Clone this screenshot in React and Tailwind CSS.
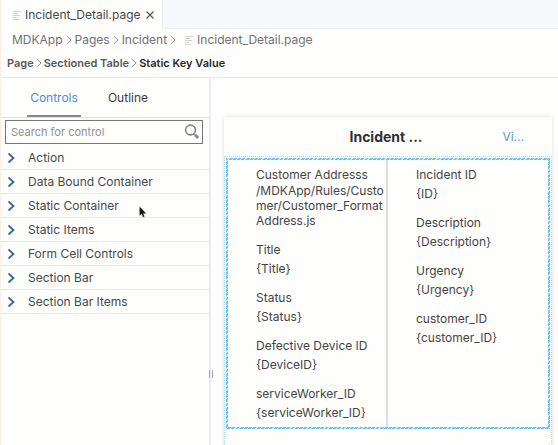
import React from "react";

const CONTROLS = [
  "Action",
  "Data Bound Container",
  "Static Container",
  "Static Items",
  "Form Cell Controls",
  "Section Bar",
  "Section Bar Items",
];

const LEFT_FIELDS = [
  { label: "Customer Addresss", value: "/MDKApp/Rules/Customer/Customer_FormatAddress.js", tight: true },
  { label: "Title", value: "{Title}" },
  { label: "Status", value: "{Status}" },
  { label: "Defective Device ID", value: "{DeviceID}" },
  { label: "serviceWorker_ID", value: "{serviceWorker_ID}" },
];

const RIGHT_FIELDS = [
  { label: "Incident ID", value: "{ID}" },
  { label: "Description", value: "{Description}" },
  { label: "Urgency", value: "{Urgency}" },
  { label: "customer_ID", value: "{customer_ID}" },
];

function FileIcon() {
  return (
    <svg className="h-2.5 w-2 shrink-0" viewBox="0 0 8 10" fill="none" stroke="#d2d2d4" strokeWidth="1" aria-hidden="true">
      <path d="M0 1.5h8M0 3.5h5M0 5.5h7M0 7.5h4M0 9.5h6" />
    </svg>
  );
}

function Chevron({ className, color = "#8a8a8c", width = 1.1 }) {
  return (
    <svg className={className} viewBox="0 0 8 12" fill="none" stroke={color} strokeWidth={width} aria-hidden="true">
      <path d="M1.5 1.5 6.5 6l-5 4.5" />
    </svg>
  );
}

function Crumb({ children }) {
  return (
    <>
      <a href="#" className="shrink-0">{children}</a>
      <Chevron className="h-2.5 w-2 shrink-0" />
    </>
  );
}

function FieldList({ fields }) {
  return (
    <dl className="flex flex-col gap-3.5">
      {fields.map((f) => (
        <div key={f.label} className={f.tight ? "flex flex-col gap-px" : "flex flex-col gap-1"}>
          <dt>{f.label}</dt>
          <dd className="break-all">{f.value}</dd>
        </div>
      ))}
    </dl>
  );
}

function ControlsPanel() {
  return (
    <aside className="relative w-[210px] shrink-0 border-r-2 border-[#ebebf3]">
      <div role="tablist" className="flex h-10 items-stretch border-b border-[#e4e4ec] pl-[26px] text-[12px]">
        <button role="tab" aria-selected="true" className="w-[54px] border-b-2 border-[#85878b] pt-0.5 text-[#4a8be0]">
          Controls
        </button>
        <button role="tab" aria-selected="false" className="ml-6 w-[46px] border-b-2 border-transparent pt-0.5 text-[#3c3c3e]">
          Outline
        </button>
      </div>
      <label className="mt-0.5 mr-1.5 ml-1 flex h-6 items-center border border-[#77787c] pr-0.5 pl-[5px]">
        <input
          type="text"
          aria-label="Search for control"
          placeholder="Search for control"
          className="min-w-0 flex-1 bg-transparent text-[11px] outline-none placeholder:text-[#909092]"
        />
        <svg className="h-4 w-4 shrink-0" viewBox="0 0 16 16" fill="none" stroke="#85868a" aria-hidden="true">
          <circle cx="6.5" cy="6" r="4.9" strokeWidth="1.6" />
          <path d="m10 9.7 1.5 1.5" strokeWidth="1.3" />
          <path d="m11.2 10.9 3 3" strokeWidth="2.8" />
        </svg>
      </label>
      <ul className="mt-0.5">
        {CONTROLS.map((name) => (
          <li key={name} className="border-b border-[#e6e6ec]">
            <button className="flex h-[23px] w-full items-center gap-3 pl-[5px] text-left text-[12px] text-[#48484a]">
              <Chevron className="h-3 w-2.5 shrink-0" color="#2f649c" width={1.7} />
              {name}
            </button>
          </li>
        ))}
      </ul>
      <span className="absolute top-[292px] -right-1 flex h-2 w-1 justify-between" aria-hidden="true">
        <i className="w-px bg-[#a2a2a6]" />
        <i className="w-px bg-[#a2a2a6]" />
      </span>
      <svg className="pointer-events-none absolute top-[128px] left-[138px] h-3 w-2" viewBox="0 0 8 12" aria-hidden="true">
        <path d="M.5.5v9.2l2.1-1.8 1.4 3.4 1.6-.7-1.4-3.2h3z" fill="#111" stroke="#bbb" strokeWidth=".3" />
      </svg>
    </aside>
  );
}

function PagePreview() {
  return (
    <main className="flex min-w-0 flex-1 pt-[39px] pr-1.5 pl-[13px]">
      <article className="flex min-w-0 flex-1 flex-col shadow-[0_0_4px_rgba(0,0,0,0.14)]">
        <header className="flex h-[39px] shrink-0 items-center">
          <span className="flex-1 pl-6" />
          <h1 className="text-[14px] font-bold text-[#303032]">Incident ...</h1>
          <span className="flex flex-1 justify-end pr-7">
            <a href="#" className="text-[12px] text-[#5c98cf]">Vi...</a>
          </span>
        </header>
        <div className="flex-1 border border-b-0 border-dotted border-[#b4dbe9] p-px">
          <section className="flex h-[271px] bg-[repeating-linear-gradient(135deg,#66c2ee_0,#66c2ee_2px,#c9e9f8_2px,#c9e9f8_3px)] p-0.5 text-[12px] leading-[15px] text-[#444446]">
            <div className="grid flex-1 grid-cols-2 bg-[#fefefd]">
              <div className="border-r-2 border-[#dededf] pt-[7px] pl-7">
                <FieldList fields={LEFT_FIELDS} />
              </div>
              <div className="pt-[7px] pl-7">
                <FieldList fields={RIGHT_FIELDS} />
              </div>
            </div>
          </section>
        </div>
      </article>
    </main>
  );
}

export default function App() {
  return (
    <div className="flex min-h-screen flex-col overflow-hidden border-l border-[#faeee6] bg-[#fefefd] font-['Inter','Liberation_Sans',sans-serif]">
      <div className="flex h-[29px] items-stretch bg-[#f8f9fc]">
        <div className="flex w-[162px] items-center border-r border-[#ededf0] bg-[#fefefd] pl-3 text-[12px] text-[#48484a]">
          <FileIcon />
          <span className="ml-1">Incident_Detail.page</span>
          <button aria-label="Close tab" className="ml-1">
            <svg className="h-2.5 w-2.5" viewBox="0 0 10 10" stroke="#505052" strokeWidth="1.1" aria-hidden="true">
              <path d="m1.5 1.5 7 7m0-7-7 7" />
            </svg>
          </button>
        </div>
        <div className="flex-1 border-b border-[#eeeeef]" />
      </div>
      <nav aria-label="File path" className="flex h-[22px] items-center gap-0.5 pl-[11px] text-[12px] text-[#727274]">
        <Crumb>MDKApp</Crumb>
        <Crumb>Pages</Crumb>
        <Crumb>Incident</Crumb>
        <span className="ml-1.5 flex items-center gap-1">
          <FileIcon />
          Incident_Detail.page
        </span>
      </nav>
      <nav aria-label="Page structure" className="flex h-[27px] items-center gap-px border-b border-[#e8e8ef] pb-0.5 pl-1.5 text-[11px] font-semibold text-[#58585a]">
        <Crumb>Page</Crumb>
        <Crumb>Sectioned Table</Crumb>
        <span className="text-[#29292b]">Static Key Value</span>
      </nav>
      <div className="flex flex-1">
        <ControlsPanel />
        <PagePreview />
      </div>
    </div>
  );
}
